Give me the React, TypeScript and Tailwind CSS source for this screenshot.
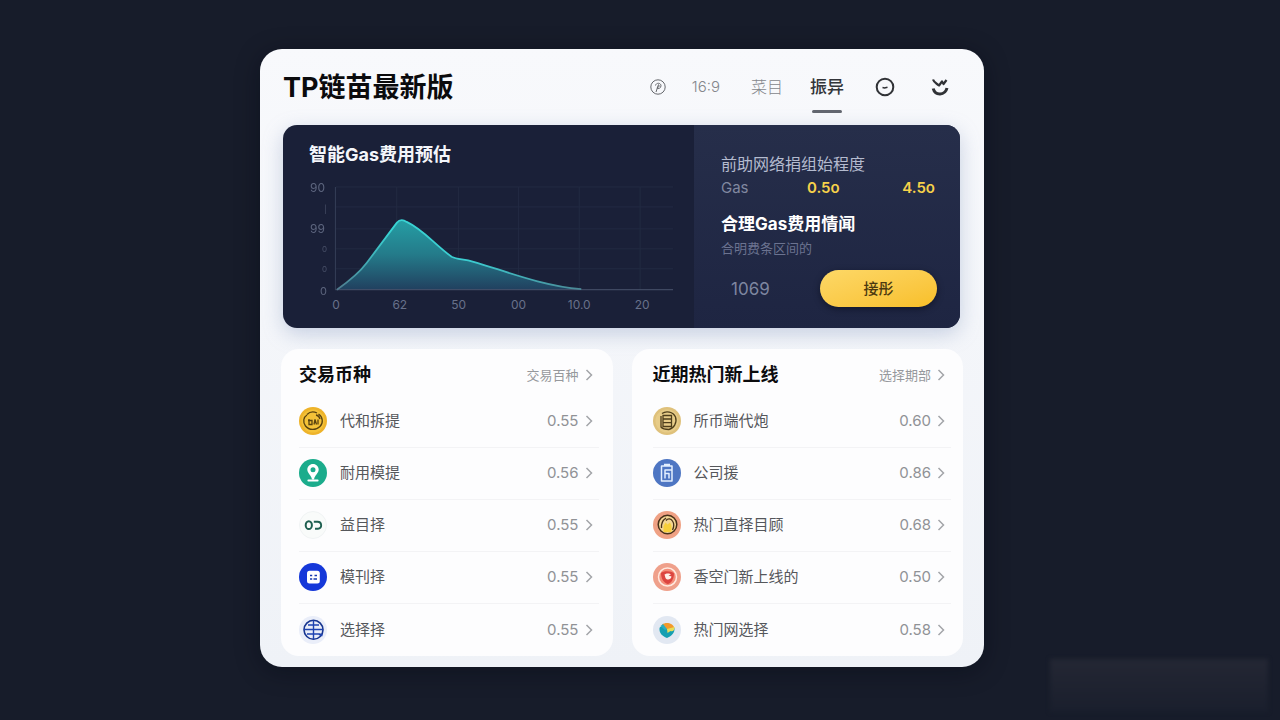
import type { ReactNode } from "react";

type Row = { name: string; value: string; icon: ReactNode };

const yLabels = [
  { text: "90", y: 191, x: 325, size: 12 },
  { text: "|", y: 211, x: 327, size: 8 },
  { text: "99", y: 232, x: 325, size: 12 },
  { text: "0", y: 251, x: 327, size: 8 },
  { text: "0", y: 271, x: 327, size: 8 },
  { text: "0", y: 294, x: 327, size: 11 },
];

const xLabels = [
  { text: "0", x: 336 },
  { text: "62", x: 400 },
  { text: "50", x: 459 },
  { text: "00", x: 519 },
  { text: "10.0", x: 580 },
  { text: "20", x: 643 },
];

const curve =
  "M337 289 C347 282 358 274 367 262 C379 246 388 234 397 222 Q401 217 407 221 C424 229 434 243 452 256 C458 259 463 258 474 261 C505 270 542 285 582 288.500";

function GasChart() {
  return (
    <svg viewBox="301 178 380 136" className="block w-full" role="img" aria-label="智能Gas费用预估">
      <defs>
        <linearGradient id="area" x1="0" y1="218" x2="0" y2="289" gradientUnits="userSpaceOnUse">
          <stop offset="0" stopColor="#259fa5" />
          <stop offset="0.5" stopColor="#247b8a" />
          <stop offset="1" stopColor="#21405f" />
        </linearGradient>
        <linearGradient id="stroke" x1="337" y1="0" x2="582" y2="0" gradientUnits="userSpaceOnUse">
          <stop offset="0" stopColor="#50798c" />
          <stop offset="0.22" stopColor="#38d3d3" />
          <stop offset="0.55" stopColor="#3cccd0" />
          <stop offset="1" stopColor="#4b8795" />
        </linearGradient>
      </defs>
      <g stroke="#222a42" strokeWidth="1">
        {[186, 206, 228, 248, 268].map((y) => (
          <line key={y} x1="336" x2="674" y1={y} y2={y} />
        ))}
        {[397, 459, 519, 580, 641].map((x) => (
          <line key={x} y1="186" y2="289" x1={x} x2={x} />
        ))}
      </g>
      <path d={`${curve} L582 289 Z`} fill="url(#area)" />
      <path d="M335.500 186 V289" fill="none" stroke="#353e57" />
      <path d="M335.500 289 H674" fill="none" stroke="#4a546c" />
      <path d={curve} fill="none" stroke="url(#stroke)" strokeWidth="1.800" />
      <g fill="#68718a">
        {yLabels.map((l) => (
          <text key={l.y} x={l.x} y={l.y} fontSize={l.size} textAnchor="end" opacity={l.size === 8 ? 0.6 : 0.85}>
            {l.text}
          </text>
        ))}
        {xLabels.map((l) => (
          <text key={l.x} x={l.x} y="308" fontSize="12" textAnchor="middle">
            {l.text}
          </text>
        ))}
      </g>
    </svg>
  );
}

function Chevron() {
  return (
    <svg viewBox="0 0 8 14" className="h-3.5 w-2 shrink-0" fill="none" stroke="#a3a5a9" strokeWidth="1.500">
      <path d="M1.500 2 L6.500 7 L1.500 12" />
    </svg>
  );
}

function Coin({ children }: { children: ReactNode }) {
  return (
    <svg viewBox="0 0 28 28" className="size-7 shrink-0" fill="none" aria-hidden="true">
      {children}
    </svg>
  );
}

const tradeRows: Row[] = [
  {
    name: "代和拆提",
    value: "0.55",
    icon: (
      <Coin>
        <circle cx="14" cy="14" r="14" fill="#eeb32a" />
        <circle cx="14" cy="14" r="11.500" fill="#f4c238" />
        <path d="M8 7.500 C11 4.500 15 4.500 18 6 M19.500 7 C24 10 24.500 16 21 19.500 C17 23.500 10 23.500 6.500 19 C3.500 15 4.500 10 8 8 M17 8 C19.500 8.500 20.500 10 21 12" stroke="#59420f" strokeWidth="1.300" />
        <path d="M10 12 V17.500 H13 V13.500 H9 M15 17.500 L16 12.500 L17.500 17.500 M19 12.500 V17.500" stroke="#59420f" strokeWidth="1.300" />
      </Coin>
    ),
  },
  {
    name: "耐用模提",
    value: "0.56",
    icon: (
      <Coin>
        <circle cx="14" cy="14" r="14" fill="#1bac8c" />
        <path fillRule="evenodd" d="M14 5 C10.800 5 8.300 7.500 8.300 10.600 C8.300 14.300 12.200 16 13 20.500 H15 C15.800 16 19.700 14.300 19.700 10.600 C19.700 7.500 17.200 5 14 5 Z M14 8.200 A2.500 2.500 0 1 1 14 13.200 A2.500 2.500 0 1 1 14 8.200 Z" fill="#fff" />
        <path d="M9.300 21.500 H18.700" stroke="#fff" strokeWidth="1.800" strokeLinecap="round" />
      </Coin>
    ),
  },
  {
    name: "益目择",
    value: "0.55",
    icon: (
      <Coin>
        <circle cx="14" cy="14" r="13.500" fill="#f9fbfa" stroke="#f0f3f4" />
        <ellipse cx="9.800" cy="14.200" rx="3.100" ry="3.900" stroke="#1e5f50" strokeWidth="2" />
        <path d="M14.800 10.700 H18.500 C23.300 10.700 23.300 17.800 19 17.800 H16" stroke="#1e5f50" strokeWidth="1.900" />
      </Coin>
    ),
  },
  {
    name: "模刊择",
    value: "0.55",
    icon: (
      <Coin>
        <circle cx="14" cy="14" r="14" fill="#1538d9" />
        <rect x="8" y="7.800" width="12.800" height="12.800" rx="2.500" fill="#fff" />
        <path d="M11 12.500 H13.200 M15.500 12.500 H18 M11 16 H13.200 M14.500 16 H18" stroke="#1538b0" strokeWidth="1.500" />
      </Coin>
    ),
  },
  {
    name: "选择择",
    value: "0.55",
    icon: (
      <Coin>
        <circle cx="14" cy="14" r="14" fill="#eaeef9" />
        <circle cx="14.500" cy="13.800" r="9.500" stroke="#173590" strokeWidth="1.600" />
        <path d="M14.500 4.500 V23 M5 13.500 H24 M9 9 H20 M8 18 H20" stroke="#1e43b1" strokeWidth="1.400" />
        <path d="M20 18 L23.500 19.500" stroke="#1e43b1" strokeWidth="2" />
      </Coin>
    ),
  },
];

const hotRows: Row[] = [
  {
    name: "所币端代炮",
    value: "0.60",
    icon: (
      <Coin>
        <circle cx="14" cy="14" r="14" fill="#dfc17b" />
        <circle cx="14" cy="14" r="11.500" fill="#e7cc88" />
        <path d="M9 6.500 C13 3.500 20 4.500 22.500 10 C24.500 16 20.500 21.500 16 22.500 M10 8.500 H18.500 V19.500 H10 Z M10 12 H18.500 M10 15.700 H18.500 M8 9 V20 C10 22.500 14 22.500 16 22.500" stroke="#4f3f1c" strokeWidth="1.300" />
      </Coin>
    ),
  },
  {
    name: "公司援",
    value: "0.86",
    icon: (
      <Coin>
        <circle cx="14" cy="14" r="14" fill="#4e76c3" />
        <path d="M8.500 7 H19 V22 H8.500 Z M11 5.500 H17 M12 19.500 V11 H19 M12 14.500 H16 V19.500" stroke="#e4f0ff" strokeWidth="1.500" strokeLinejoin="round" />
      </Coin>
    ),
  },
  {
    name: "热门直择目顾",
    value: "0.68",
    icon: (
      <Coin>
        <circle cx="14" cy="14" r="14" fill="#efa184" />
        <circle cx="14.500" cy="13.500" r="9.300" fill="#f3d594" stroke="#483119" strokeWidth="1.500" />
        <path d="M8.500 17 C8 12 10 9 13 7 M13 9.500 C15 7 18 7.500 19.500 10 C21.500 13 21 16 19.500 19" stroke="#483119" strokeWidth="1.300" />
        <path d="M10.500 21 V15 L12.500 11.500 L14.500 13.500 L17 11.500 L18.500 15 V21 Z" fill="#f7cf3a" />
      </Coin>
    ),
  },
  {
    name: "香空门新上线的",
    value: "0.50",
    icon: (
      <Coin>
        <circle cx="14" cy="14" r="14" fill="#efa08b" />
        <circle cx="14.500" cy="14" r="9" fill="#f48c78" stroke="#ffe9df" strokeWidth="1.500" />
        <path d="M8 10 C10 7.500 19 7.500 21 10.500 C21 16 18 20.500 14.500 21 C10 19 8 15 8 10 Z" fill="#dc4540" />
        <path d="M11.500 11.500 C13 10 17 10 18 11.500 L15.500 12.500 L18.500 13.500 C18 17 14 17.500 12.500 15 Z" fill="#fff1ea" />
      </Coin>
    ),
  },
  {
    name: "热门网选择",
    value: "0.58",
    icon: (
      <Coin>
        <circle cx="14" cy="14" r="14" fill="#e2e8f2" />
        <path d="M6.500 12 C8 9 12 11 14 13 L21.500 12 C22 17 18 20.500 14 22 C9 20 6 17 6.500 12 Z" fill="#159fb1" />
        <path d="M9 8.500 C13 5.500 20 7 21.500 12 L14 13.500 Z" fill="#f39a2b" />
        <path d="M14 13 L21.500 11 C21.800 14 20 16 17.500 15 L14.500 17 Z" fill="#e6dd59" />
        <path d="M7.500 10 L10 8 L14 13 L12 14 Z" fill="#2aaec0" />
      </Coin>
    ),
  },
];

function ListCard({ title, link, rows, inset }: { title: string; link: string; rows: Row[]; inset: string }) {
  return (
    <section className={`rounded-[18px] bg-[#fdfdfe] ${inset}`}>
      <div className="flex h-[47px] items-center justify-between pt-1.5 pr-1.5">
        <h2 className="text-[18px] leading-6 font-bold text-[#0c0c0e]">{title}</h2>
        <a href="#all" className="flex items-center gap-1.5 text-[13px] leading-5 text-[#96989c]">
          {link}
          <Chevron />
        </a>
      </div>
      <ul className="divide-y divide-[#f3f3f5]">
        {rows.map((row) => (
          <li key={row.name} className="h-[52px]">
            <a href="#detail" className="flex h-full items-center gap-[13px] pr-1.5">
              {row.icon}
              <span className="flex-1 text-[15px] leading-5 text-[#55575b]">{row.name}</span>
              <span className="flex items-center gap-1.5 text-[15px] leading-5 text-[#909296]">
                {row.value}
                <Chevron />
              </span>
            </a>
          </li>
        ))}
      </ul>
    </section>
  );
}

export default function App() {
  return (
    <div className="relative flex min-h-screen items-start justify-center overflow-hidden bg-[#171c2a] pt-[49px] pr-9 pb-12 font-['Inter','Noto_Sans_CJK_SC',sans-serif]">
      <main className="w-full max-w-[724px] rounded-[22px] bg-linear-to-b from-[#f8f9fc] to-[#eff2f7] px-[21px] pb-[11px] shadow-[0_4px_24px_rgba(5,8,18,0.4)]">
        <header className="flex h-[76px] items-center justify-between pr-3.5 pl-0.5">
          <h1 className="pt-0.5 text-[27px] leading-9 font-bold text-[#0b0b0d]">TP链苗最新版</h1>
          <nav className="flex items-center text-[#85878c]">
            <button type="button" aria-label="支付" className="mr-[26px]">
              <svg viewBox="0 0 16 16" className="size-4" fill="none" stroke="#65676c" strokeWidth="1">
                <circle cx="8" cy="8" r="7.200" />
                <path d="M5.500 6.500 C6 3.500 11 3.500 11 6.800 C11 9.500 8 10 6.800 9 M8.500 5.500 L6 13 M8.500 6 C10 6.500 9 8.500 7.500 8" />
              </svg>
            </button>
            <a href="#ratio" className="mr-[31px] text-[15px] leading-5 font-light">16:9</a>
            <a href="#menu" className="mr-[27px] text-[16px] leading-5 font-light">菜目</a>
            <a href="#current" aria-current="page" className="relative mr-[31px] text-[17px] leading-6 font-medium text-[#333539]">
              振异
              <span className="absolute inset-x-0.5 top-[35px] h-[3px] rounded-full bg-[#62666f]" />
            </a>
            <button type="button" aria-label="更多" className="mr-9">
              <svg viewBox="0 0 20 20" className="size-5" fill="none" stroke="#303236" strokeWidth="2">
                <circle cx="10" cy="10" r="8.300" />
                <path d="M7.500 10.500 L9.500 11 L12.500 10.200" strokeWidth="1.500" />
              </svg>
            </button>
            <button type="button" aria-label="账户">
              <svg viewBox="0 0 18 20" className="h-5 w-[18px]" fill="none" stroke="#303236">
                <path d="M2 2.500 C3 5.500 5 6 8 8.500 L11 4.500 L12.500 7 L15.500 3" strokeWidth="2.200" strokeLinejoin="round" />
                <path d="M2.200 11.500 C4 18.800 14 18.800 16 11" strokeWidth="3" />
              </svg>
            </button>
          </nav>
        </header>

        <section className="mr-[3px] mb-[21px] ml-0.5 grid grid-cols-[411fr_266fr] overflow-hidden rounded-[14px] bg-[#1a2038] shadow-[0_6px_20px_rgba(130,150,190,0.4)]">
          <div className="pt-[18px] pr-3.5 pb-[13px] pl-[18px]">
            <h2 className="mb-3 pl-2 text-[18px] leading-6 font-bold text-[#f4f6fb]">智能Gas费用预估</h2>
            <GasChart />
          </div>
          <div className="bg-linear-to-b from-[#262e4a] to-[#1e2542] pt-[27px] pr-[23px] pb-5 pl-[27px]">
            <p className="text-[16px] leading-6 text-[#b4bbcf]">前助网络捐组始程度</p>
            <div className="flex items-center justify-between pr-0.5 text-[15px] leading-6">
              <span className="w-[86px] text-[#8188a0]">Gas</span>
              <span className="flex-1 font-semibold text-[#f6d14a]">0.5o</span>
              <span className="font-semibold text-[#f6d14a]">4.5o</span>
            </div>
            <h3 className="mt-3 text-[17px] leading-6 font-bold text-white">合理Gas费用情闻</h3>
            <p className="mt-0.5 text-[13px] leading-5 text-[#6b7390]">合明费条区间的</p>
            <div className="mt-3 flex items-center justify-between pl-2.5">
              <span className="text-[17px] leading-6 text-[#7e86a0]">1069</span>
              <button
                type="button"
                className="h-[37px] w-[117px] rounded-full bg-linear-to-br from-[#fdd866] to-[#f8bf26] text-[15px] leading-5 font-medium text-[#4b3910] shadow-[0_2px_6px_rgba(5,8,20,0.5)]"
              >
                接彤
              </button>
            </div>
          </div>
        </section>

        <div className="grid grid-cols-2 gap-[19px]">
          <ListCard title="交易币种" link="交易百种" rows={tradeRows} inset="pl-[18px] pr-3.5" />
          <ListCard title="近期热门新上线" link="选择期部" rows={hotRows} inset="pl-[21px] pr-3" />
        </div>
      </main>
      <div
        aria-hidden="true"
        className="absolute right-3 bottom-2 h-[53px] w-[218px] bg-linear-to-b from-[#242734] to-[#1a1f2d] blur-[2px]"
      />
    </div>
  );
}
